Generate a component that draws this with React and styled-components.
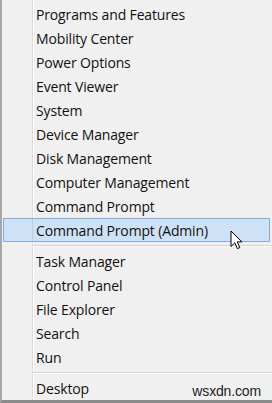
import React from "react";
import styled, { createGlobalStyle } from "styled-components";

const GlobalStyle = createGlobalStyle`
  html, body { margin: 0; padding: 0; background: #f0f0f0; }
  body { font-family: "Open Sans", "Noto Sans", sans-serif; }
`;

const Menu = styled.div`
  position: relative;
  box-sizing: border-box;
  width: 272px;
  height: 403px;
  overflow: hidden;
  padding-top: 2px;
  display: flex;
  flex-direction: column;
  border-left: 2px solid #a6a6a6;
  border-bottom: 3px solid #8a8a8a;
  background:
    linear-gradient(
      to right,
      transparent 30px,
      #dcdcdc 30px,
      #dcdcdc 31px,
      #ffffff 31px,
      #ffffff 32px,
      transparent 32px
    ),
    #f0f0f0;
`;

const Item = styled.div`
  box-sizing: border-box;
  height: 24px;
  flex: none;
  display: flex;
  align-items: center;
  justify-content: space-between;
  padding-left: ${(p) => (p.$active ? "32px" : "34px")};
  margin: ${(p) => (p.$active ? "0 2px 0 1px" : "0")};
  border: ${(p) => (p.$active ? "1px solid #84acdd" : "none")};
  background: ${(p) =>
    p.$active
      ? `linear-gradient(to right, transparent 28px, rgba(170,190,215,0.55) 28px, rgba(170,190,215,0.55) 29px, transparent 29px), #cde2f6`
      : "transparent"};
  font-size: 14px;
  color: #111;
  white-space: nowrap;
  letter-spacing: -0.15px;
`;

const Separator = styled.div`
  flex: none;
  height: 7px;
  margin-left: 30px;
  display: flex;
  flex-direction: column;
  justify-content: center;
  &::before {
    content: "";
    display: block;
    height: 1px;
    background: #d4d4d4;
  }
  &::after {
    content: "";
    display: block;
    height: 1px;
    background: #fcfcfc;
  }
`;

const Watermark = styled.span`
  align-self: flex-end;
  margin-right: 11px;
  margin-bottom: 1px;
  font-family: "Liberation Sans", Arial, sans-serif;
  font-size: 14px;
  color: #222;
`;

const Cursor = styled.svg`
  position: absolute;
  left: 228px;
  top: 230px;
  width: 13px;
  height: 20px;
`;

const groups = [
  [
    "Programs and Features",
    "Mobility Center",
    "Power Options",
    "Event Viewer",
    "System",
    "Device Manager",
    "Disk Management",
    "Computer Management",
    "Command Prompt",
    "Command Prompt (Admin)",
  ],
  ["Task Manager", "Control Panel", "File Explorer", "Search", "Run"],
  ["Desktop"],
];

export default function App() {
  return (
    <>
      <GlobalStyle />
      <Menu>
        {groups.map((g, gi) => (
          <React.Fragment key={gi}>
            {gi > 0 && <Separator />}
            {g.map((label) => (
              <Item key={label} $active={label === "Command Prompt (Admin)"}>
                <span>{label}</span>
                {label === "Desktop" && <Watermark>wsxdn.com</Watermark>}
              </Item>
            ))}
          </React.Fragment>
        ))}
        <Cursor viewBox="0 0 13 20">
          <path
            d="M1 1 L1 16.5 L4.8 12.8 L7.4 18.6 L9.8 17.6 L7.3 11.9 L12 11.9 Z"
            fill="#fff"
            stroke="#000"
            strokeWidth="1"
            strokeLinejoin="miter"
          />
        </Cursor>
      </Menu>
    </>
  );
}
